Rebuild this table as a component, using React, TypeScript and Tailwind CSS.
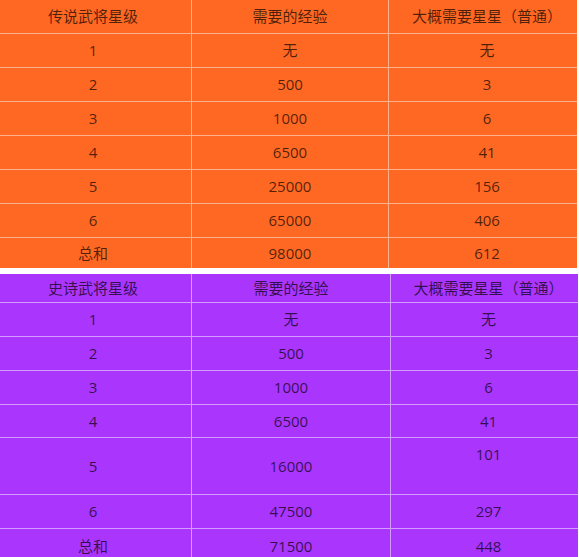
import React from 'react';

type Row = { cells: [string, string, string]; h: string; last?: boolean; topThird?: boolean };

const legendRows: Row[] = [
  { cells: ['传说武将星级', '需要的经验', '大概需要星星（普通）'], h: 'h-[34px]' },
  { cells: ['1', '无', '无'], h: 'h-[34px]' },
  { cells: ['2', '500', '3'], h: 'h-[34px]' },
  { cells: ['3', '1000', '6'], h: 'h-[34px]' },
  { cells: ['4', '6500', '41'], h: 'h-[34px]' },
  { cells: ['5', '25000', '156'], h: 'h-[34px]' },
  { cells: ['6', '65000', '406'], h: 'h-[34px]' },
  { cells: ['总和', '98000', '612'], h: 'h-[30px]', last: true },
];

const epicRows: Row[] = [
  { cells: ['史诗武将星级', '需要的经验', '大概需要星星（普通）'], h: 'h-[29px]' },
  { cells: ['1', '无', '无'], h: 'h-[34px]' },
  { cells: ['2', '500', '3'], h: 'h-[34px]' },
  { cells: ['3', '1000', '6'], h: 'h-[34px]' },
  { cells: ['4', '6500', '41'], h: 'h-[33px]' },
  { cells: ['5', '16000', '101'], h: 'h-[57px]', topThird: true },
  { cells: ['6', '47500', '297'], h: 'h-[34px]' },
  { cells: ['总和', '71500', '448'], h: 'h-[34px]', last: true },
];

const StarTable: React.FC<{ rows: Row[]; purple?: boolean }> = ({ rows, purple }) => {
  const line = purple ? 'border-[#d69cfd]' : 'border-[#fcb38d]';
  return (
    <div className={`${purple ? 'bg-[#aa35fd] w-[578px]' : 'bg-[#ff6823] w-[577px]'}`}>
      {rows.map((row, i) => (
        <div key={i} className={`flex ${row.h} ${row.last ? '' : `border-b ${line}`}`}>
          <div className={`w-[192px] flex items-center justify-center pr-[5px] border-r ${line}`}>
            {row.cells[0]}
          </div>
          <div className={`${purple ? 'w-[199px]' : 'w-[197px]'} flex items-center justify-center border-r ${line}`}>
            {row.cells[1]}
          </div>
          <div
            className={`flex-1 flex justify-center pl-[8px] ${row.topThird ? 'items-start pt-[6px]' : 'items-center'}`}
          >
            {row.cells[2]}
          </div>
        </div>
      ))}
    </div>
  );
};

export default function App() {
  return (
    <div
      className="bg-white w-[579px] text-[15px] leading-[21px] text-[#000000b0]"
      style={{ fontFamily: '"Open Sans", "Noto Sans CJK SC", sans-serif' }}
    >
      <StarTable rows={legendRows} />
      <div className="h-[6px]" />
      <StarTable rows={epicRows} purple />
    </div>
  );
}
